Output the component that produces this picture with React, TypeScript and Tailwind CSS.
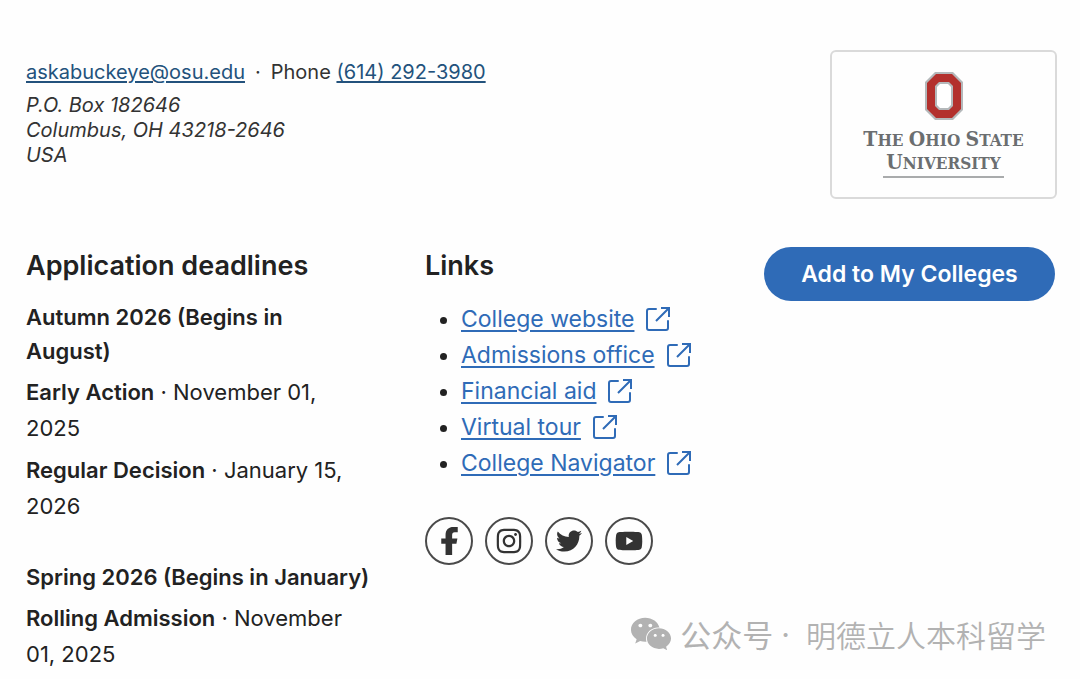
import React from 'react';
import { FaInstagram, FaTwitter, FaWeixin, FaYoutube } from 'react-icons/fa';

interface Deadline {
  name: string;
  date: string;
}

interface Term {
  title: string;
  deadlines: Deadline[];
}

const terms: Term[] = [
  {
    title: 'Autumn 2026 (Begins in August)',
    deadlines: [
      { name: 'Early Action', date: 'November 01, 2025' },
      { name: 'Regular Decision', date: 'January 15, 2026' },
    ],
  },
  {
    title: 'Spring 2026 (Begins in January)',
    deadlines: [{ name: 'Rolling Admission', date: 'November 01, 2025' }],
  },
];

const links = ['College website', 'Admissions office', 'Financial aid', 'Virtual tour', 'College Navigator'];

const FacebookIcon: React.FC = () => (
  <svg viewBox="0 0 50 85" className="h-7 w-[17px]" fill="currentColor" aria-hidden="true">
    <path d="M13 85V51H0V35h13V25C13 8 22 0 37 0h13v16h-9c-6 0-8 3-8 9v10h16l-3 16H33v34z" />
  </svg>
);

const socials = [
  { label: 'Facebook', icon: <FacebookIcon /> },
  { label: 'Instagram', icon: <FaInstagram className="h-7 w-7" /> },
  { label: 'Twitter', icon: <FaTwitter className="h-[26px] w-[26px]" /> },
  { label: 'YouTube', icon: <FaYoutube className="h-7 w-7" /> },
];

const ExternalIcon: React.FC = () => (
  <svg
    viewBox="0 0 24 24"
    className="h-6 w-6 shrink-0"
    fill="none"
    stroke="currentColor"
    strokeWidth="2"
    aria-hidden="true"
  >
    <path d="M10 2H3a2 2 0 0 0-2 2v17a2 2 0 0 0 2 2h17a2 2 0 0 0 2-2v-7" strokeLinecap="round" />
    <path d="M10 14 23 1M15 1h8v9" />
  </svg>
);

const CollegeLogo: React.FC = () => (
  <div className="flex h-[149px] w-[227px] shrink-0 flex-col items-center rounded-md border-2 border-[#dadada] pt-5 text-[#6b6e70]">
    <svg viewBox="0 0 38 48" className="h-12 w-[38px]" aria-hidden="true">
      <path d="M10 0h18l10 10v28L28 48H10L0 38V10z" fill="#b4b8ba" />
      <path d="M11 2h16l9 9v26l-9 9H11l-9-9V11z" fill="#b3302d" />
      <path d="M14 10h10l4 4v20l-4 4H14l-4-4V14z" fill="#b4b8ba" />
      <path d="M15 12h8l3 3v18l-3 3h-8l-3-3V15z" fill="#fff" />
    </svg>
    <div className="mt-2 text-center font-['DejaVu_Serif_Condensed','DejaVu_Serif',serif] text-[17px] leading-[22px] font-bold whitespace-nowrap">
      <div>
        <span className="text-[21px] leading-none">T</span>HE <span className="text-[21px] leading-none">O</span>HIO{' '}
        <span className="text-[21px] leading-none">S</span>TATE
      </div>
      <div>
        <span className="text-[21px] leading-none">U</span>NIVERSITY
      </div>
    </div>
    <div className="mt-0.5 h-0.5 w-[121px] bg-[#a9abac]" />
  </div>
);

const ContactInfo: React.FC = () => (
  <div className="pt-1 text-xl text-[#333]">
    <p className="leading-9">
      <a href="mailto:askabuckeye@osu.edu" className="text-[#23527c] underline underline-offset-2">
        askabuckeye@osu.edu
      </a>
      <span className="mx-2.5">·</span>
      Phone{' '}
      <a href="tel:6142923980" className="text-[#23527c] underline underline-offset-2">
        (614) 292-3980
      </a>
    </p>
    <address className="mt-[3px] leading-[25px] italic">
      P.O. Box 182646
      <br />
      Columbus, OH 43218-2646
      <br />
      USA
    </address>
  </div>
);

const Deadlines: React.FC = () => (
  <section className="pr-[54px]">
    <h2 className="mb-4 text-[27px] leading-[37px] font-semibold">Application deadlines</h2>
    <div className="flex flex-col gap-9">
      {terms.map((term) => (
        <div key={term.title} className="flex flex-col gap-1.5">
          <h3 className="leading-[34px] font-semibold">{term.title}</h3>
          {term.deadlines.map((d) => (
            <p key={d.name} className="leading-9">
              <strong className="font-semibold">{d.name}</strong> · {d.date}
            </p>
          ))}
        </div>
      ))}
    </div>
  </section>
);

const LinkList: React.FC = () => (
  <section>
    <h2 className="mb-[17px] text-[27px] leading-[37px] font-semibold">Links</h2>
    <ul className="list-disc pl-9 text-[23px]">
      {links.map((label) => (
        <li key={label} className="leading-9">
          <a href="#" className="inline-flex items-center gap-3 align-top text-[#2f6bb7]">
            <span className="underline decoration-2 underline-offset-3">{label}</span>
            <ExternalIcon />
          </a>
        </li>
      ))}
    </ul>
    <div className="mt-9 flex gap-3">
      {socials.map(({ label, icon }) => (
        <a
          key={label}
          href="#"
          aria-label={label}
          className="flex h-12 w-12 items-center justify-center rounded-full border-2 border-[#4a4a4a] text-[#333]"
        >
          {icon}
        </a>
      ))}
    </div>
  </section>
);

export default function App() {
  return (
    <main className="relative min-h-screen bg-[#fefefe] pt-[50px] pr-[23px] pb-1 pl-[26px] font-['Inter',sans-serif] text-[22px] text-[#222]">
      <header className="flex items-start justify-between">
        <ContactInfo />
        <CollegeLogo />
      </header>

      <div className="mt-12 grid grid-cols-[399fr_339fr_291fr] pr-0.5">
        <Deadlines />
        <LinkList />
        <div>
          <button type="button" className="h-[54px] w-full rounded-full bg-[#2f6bb7] text-[23px] font-semibold text-white">
            Add to My Colleges
          </button>
        </div>
      </div>

      {/* Account watermark */}
      <div className="absolute right-[34px] bottom-6 flex items-center font-['Noto_Sans_CJK_SC',sans-serif] text-[30px] leading-10 text-[#b2b2b2]">
        <FaWeixin className="mr-2 h-[42px] w-[42px]" />
        <span className="text-[31px]">公众号</span>
        <span className="mr-4 ml-2 font-['Inter',sans-serif]">·</span>
        <span className="font-[350]">明德立人本科留学</span>
      </div>
    </main>
  );
}
